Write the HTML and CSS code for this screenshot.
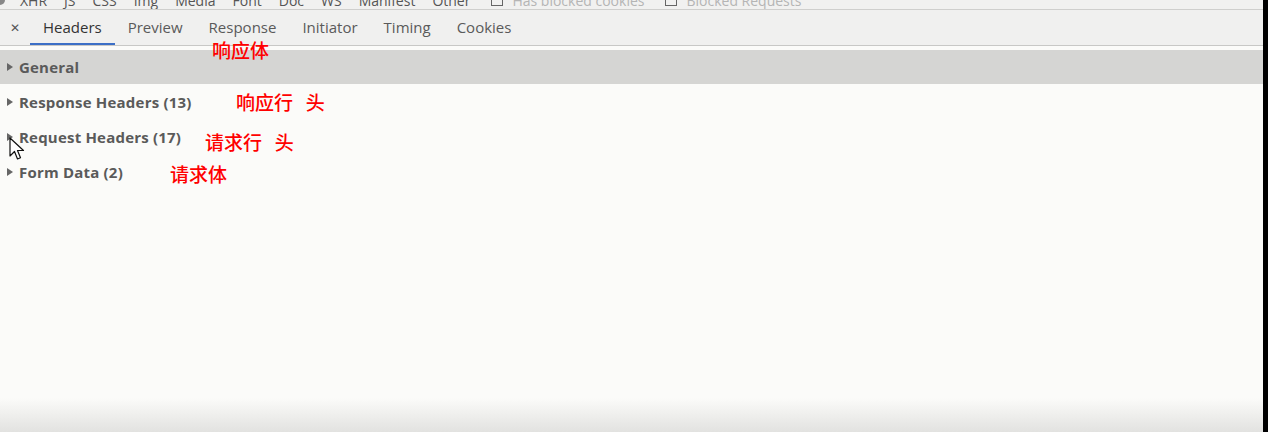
FILE: index.html
```html
<!DOCTYPE html>
<html lang="zh">
<head>
<meta charset="utf-8">
<title>Headers</title>
<link rel="stylesheet" href="styles.css">
</head>
<body>
<div class="page">
  <div class="main">
    <div class="filterbar">
      <div class="filter-inner">
        <span class="filter-icon"></span>
        <span>XHR</span><span>JS</span><span>CSS</span><span>Img</span><span>Media</span><span>Font</span><span>Doc</span><span>WS</span><span>Manifest</span><span>Other</span>
        <span class="cb"></span><span class="faint">Has blocked cookies</span>
        <span class="cb"></span><span class="faint">Blocked Requests</span>
      </div>
    </div>
    <div class="tabbar">
      <span class="close">✕</span>
      <span class="tab active">Headers</span>
      <span class="tab">Preview</span>
      <span class="tab">Response</span>
      <span class="tab">Initiator</span>
      <span class="tab">Timing</span>
      <span class="tab">Cookies</span>
    </div>
    <div class="content">
      <div class="row selected"><span class="tri"></span>General</div>
      <div class="row"><span class="tri"></span>Response Headers (13)</div>
      <div class="row"><span class="tri"></span>Request Headers (17)</div>
      <div class="row"><span class="tri"></span>Form Data (2)</div>
      <div class="fade"></div>
    </div>
    <span class="note n1">响应体</span>
    <span class="note n2">响应行&nbsp;&nbsp;&nbsp;头</span>
    <span class="note n3">请求行&nbsp;&nbsp;&nbsp;头</span>
    <span class="note n4">请求体</span>
    <svg class="cursor" width="16" height="24" viewBox="0 0 16 24">
      <path d="M1 1 L1 19 L5.5 14.5 L8.5 22 L11.5 20.8 L8.5 13.5 L14.5 13.5 Z" fill="#fff" stroke="#111" stroke-width="1.2" stroke-linejoin="round"/>
    </svg>
  </div>
  <div class="edge"></div>
</div>
</body>
</html>
```

FILE: styles.css
```css
* { box-sizing: border-box; }
html, body { margin: 0; padding: 0; }
body {
  width: 1268px;
  height: 432px;
  overflow: hidden;
  font-family: "Open Sans", "Noto Sans", sans-serif;
  background: #fbfbf9;
}
.page {
  display: flex;
  width: 1268px;
  height: 432px;
}
.main {
  position: relative;
  flex: 1;
  display: flex;
  flex-direction: column;
  overflow: hidden;
}
.edge {
  width: 5px;
  background: #000;
}
.filterbar {
  height: 10px;
  background: #f1f1f0;
  border-bottom: 1px solid #cfcfcd;
  overflow: hidden;
}
.filter-inner {
  display: flex;
  align-items: center;
  gap: 17px;
  height: 14px;
  margin-top: -7px;
  font-size: 14px;
  color: #555;
  white-space: nowrap;
}
.filter-icon {
  width: 10px;
  height: 10px;
  border-radius: 50%;
  background: #888;
  margin-left: -5px;
  margin-right: -2px;
}
.cb {
  width: 12px;
  height: 12px;
  border: 1px solid #666;
  margin-left: 4px;
  margin-right: -8px;
}
.faint { color: #b5b5b5; }
.tabbar {
  height: 36px;
  background: #f0f0ef;
  border-bottom: 1px solid #c8c8c6;
  display: flex;
  align-items: stretch;
  padding-left: 8px;
  font-size: 15px;
  color: #5a5a5a;
}
.close {
  display: flex;
  align-items: center;
  justify-content: center;
  width: 14px;
  font-size: 12px;
  color: #555;
  margin-right: 8px;
}
.tab {
  display: flex;
  align-items: center;
  padding: 1px 13px 0 13px;
  border-bottom: 2px solid transparent;
}
.tab.active {
  color: #333;
  border-bottom-color: #3c6fc6;
}
.content {
  flex: 1;
  display: flex;
  flex-direction: column;
  padding-top: 4px;
  position: relative;
}
.row {
  height: 35px;
  display: flex;
  align-items: center;
  padding-left: 7px;
  font-size: 15px;
  font-weight: 700;
  color: #5a5a5a;
  letter-spacing: 0.2px;
}
.row.selected {
  background: #d5d5d3;
  height: 34px;
}
.tri {
  width: 0;
  height: 0;
  border-top: 4px solid transparent;
  border-bottom: 4px solid transparent;
  border-left: 6px solid #666;
  margin-right: 6px;
}
.fade {
  margin-top: auto;
  height: 34px;
  background: linear-gradient(to bottom, rgba(224,224,222,0), #e2e2e0);
}
.note {
  position: absolute;
  font-family: "Noto Sans CJK SC", sans-serif;
  font-size: 19px;
  font-weight: 500;
  color: #f00;
  line-height: 1;
  white-space: nowrap;
}
.n1 { left: 212px; top: 40px; }
.n2 { left: 236px; top: 92px; }
.n3 { left: 205px; top: 132px; }
.n4 { left: 170px; top: 164px; }
.cursor {
  position: absolute;
  left: 9px;
  top: 137px;
}
```
